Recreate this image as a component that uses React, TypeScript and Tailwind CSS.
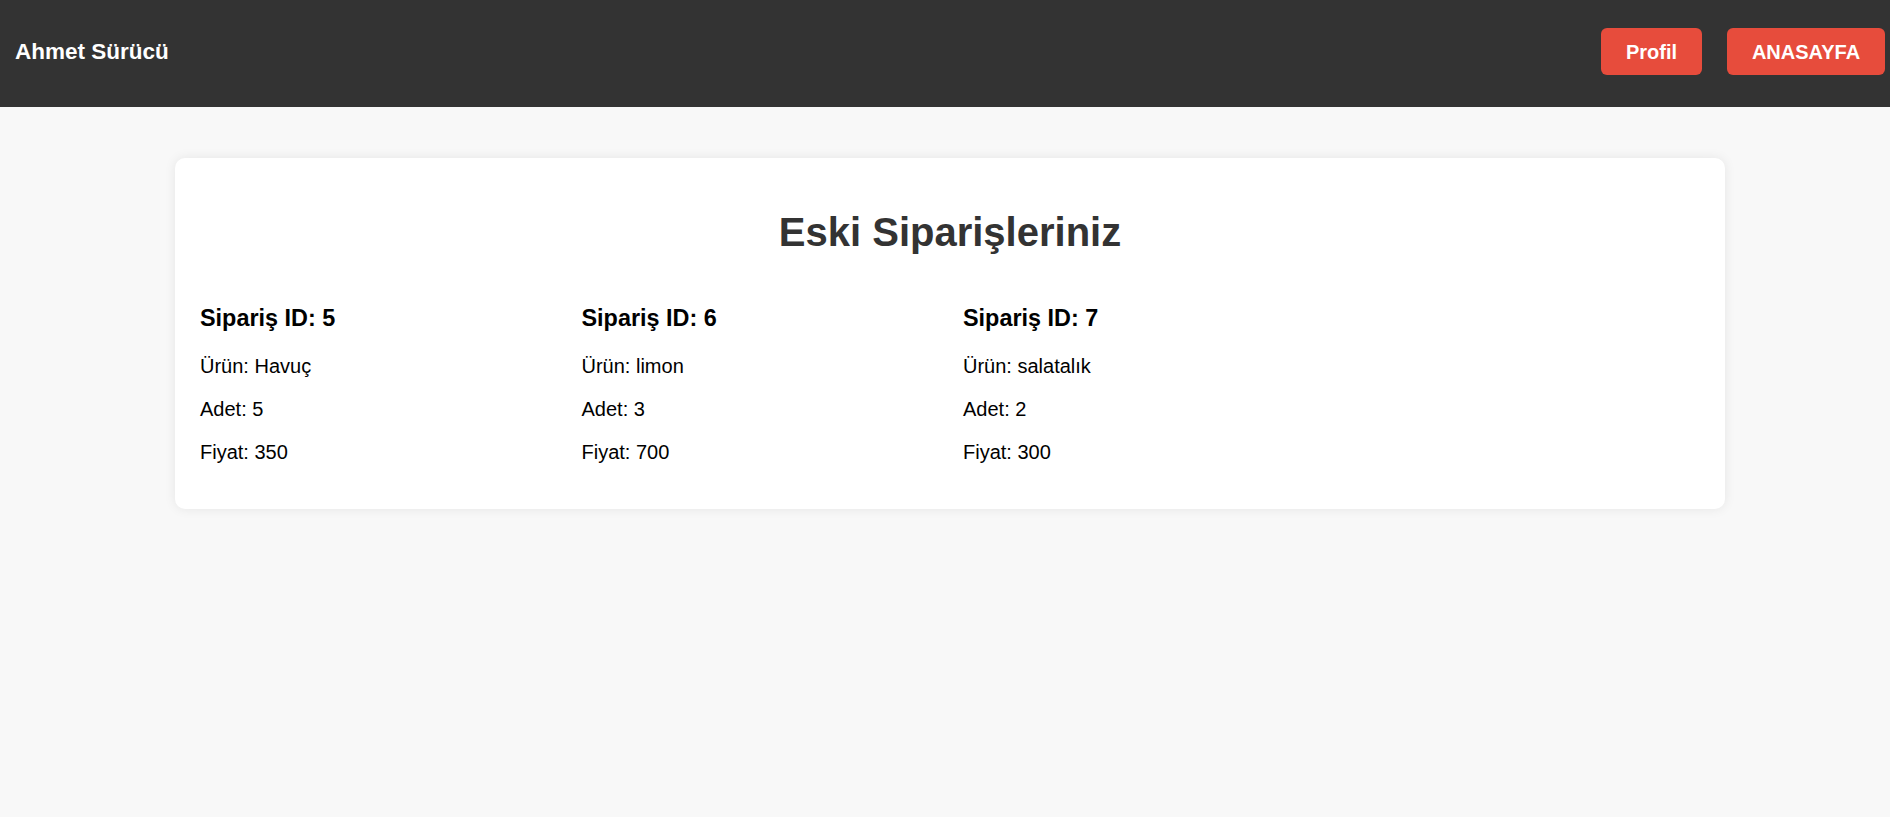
import React from 'react'

const orders = [
  { id: 5, product: 'Havuç', qty: 5, price: 350 },
  { id: 6, product: 'limon', qty: 3, price: 700 },
  { id: 7, product: 'salatalık', qty: 2, price: 300 },
]

export default function App() {
  return (
    <div
      className="min-h-screen bg-[#f8f8f8] text-black"
      style={{ fontFamily: "'Liberation Sans', Arial, sans-serif" }}
    >
      {/* Navbar */}
      <header className="h-[107px] bg-[#333333] flex items-center justify-between pl-[15px] pr-[5px] pb-[4px]">
        <h2 className="text-[22.5px] font-bold text-white leading-[normal]">Ahmet Sürücü</h2>
        <div className="flex gap-[25px]">
          <button className="h-[47px] w-[101px] rounded-[6px] bg-[#e74c3c] text-white font-bold text-[20px]">
            Profil
          </button>
          <button className="h-[47px] w-[158px] rounded-[6px] bg-[#e74c3c] text-white font-bold text-[20px]">
            ANASAYFA
          </button>
        </div>
      </header>

      {/* Orders card */}
      <div className="ml-[175px] mt-[51px] w-[1550px] bg-white rounded-[10px] p-[25px] shadow-[0_0_12px_rgba(0,0,0,0.08)]">
        <h1 className="text-[40px] font-bold text-[#333333] text-center leading-[normal] my-[26.8px]">
          Eski Siparişleriniz
        </h1>
        <div className="flex">
          {orders.map((o) => (
            <div key={o.id} className="w-[381.5px]">
              <h3 className="text-[23.4px] font-bold leading-[normal] my-[23.4px]">Sipariş ID: {o.id}</h3>
              <p className="text-[20px] leading-[normal] my-[20px]">Ürün: {o.product}</p>
              <p className="text-[20px] leading-[normal] my-[20px]">Adet: {o.qty}</p>
              <p className="text-[20px] leading-[normal] my-[20px]">Fiyat: {o.price}</p>
            </div>
          ))}
        </div>
      </div>
    </div>
  )
}
